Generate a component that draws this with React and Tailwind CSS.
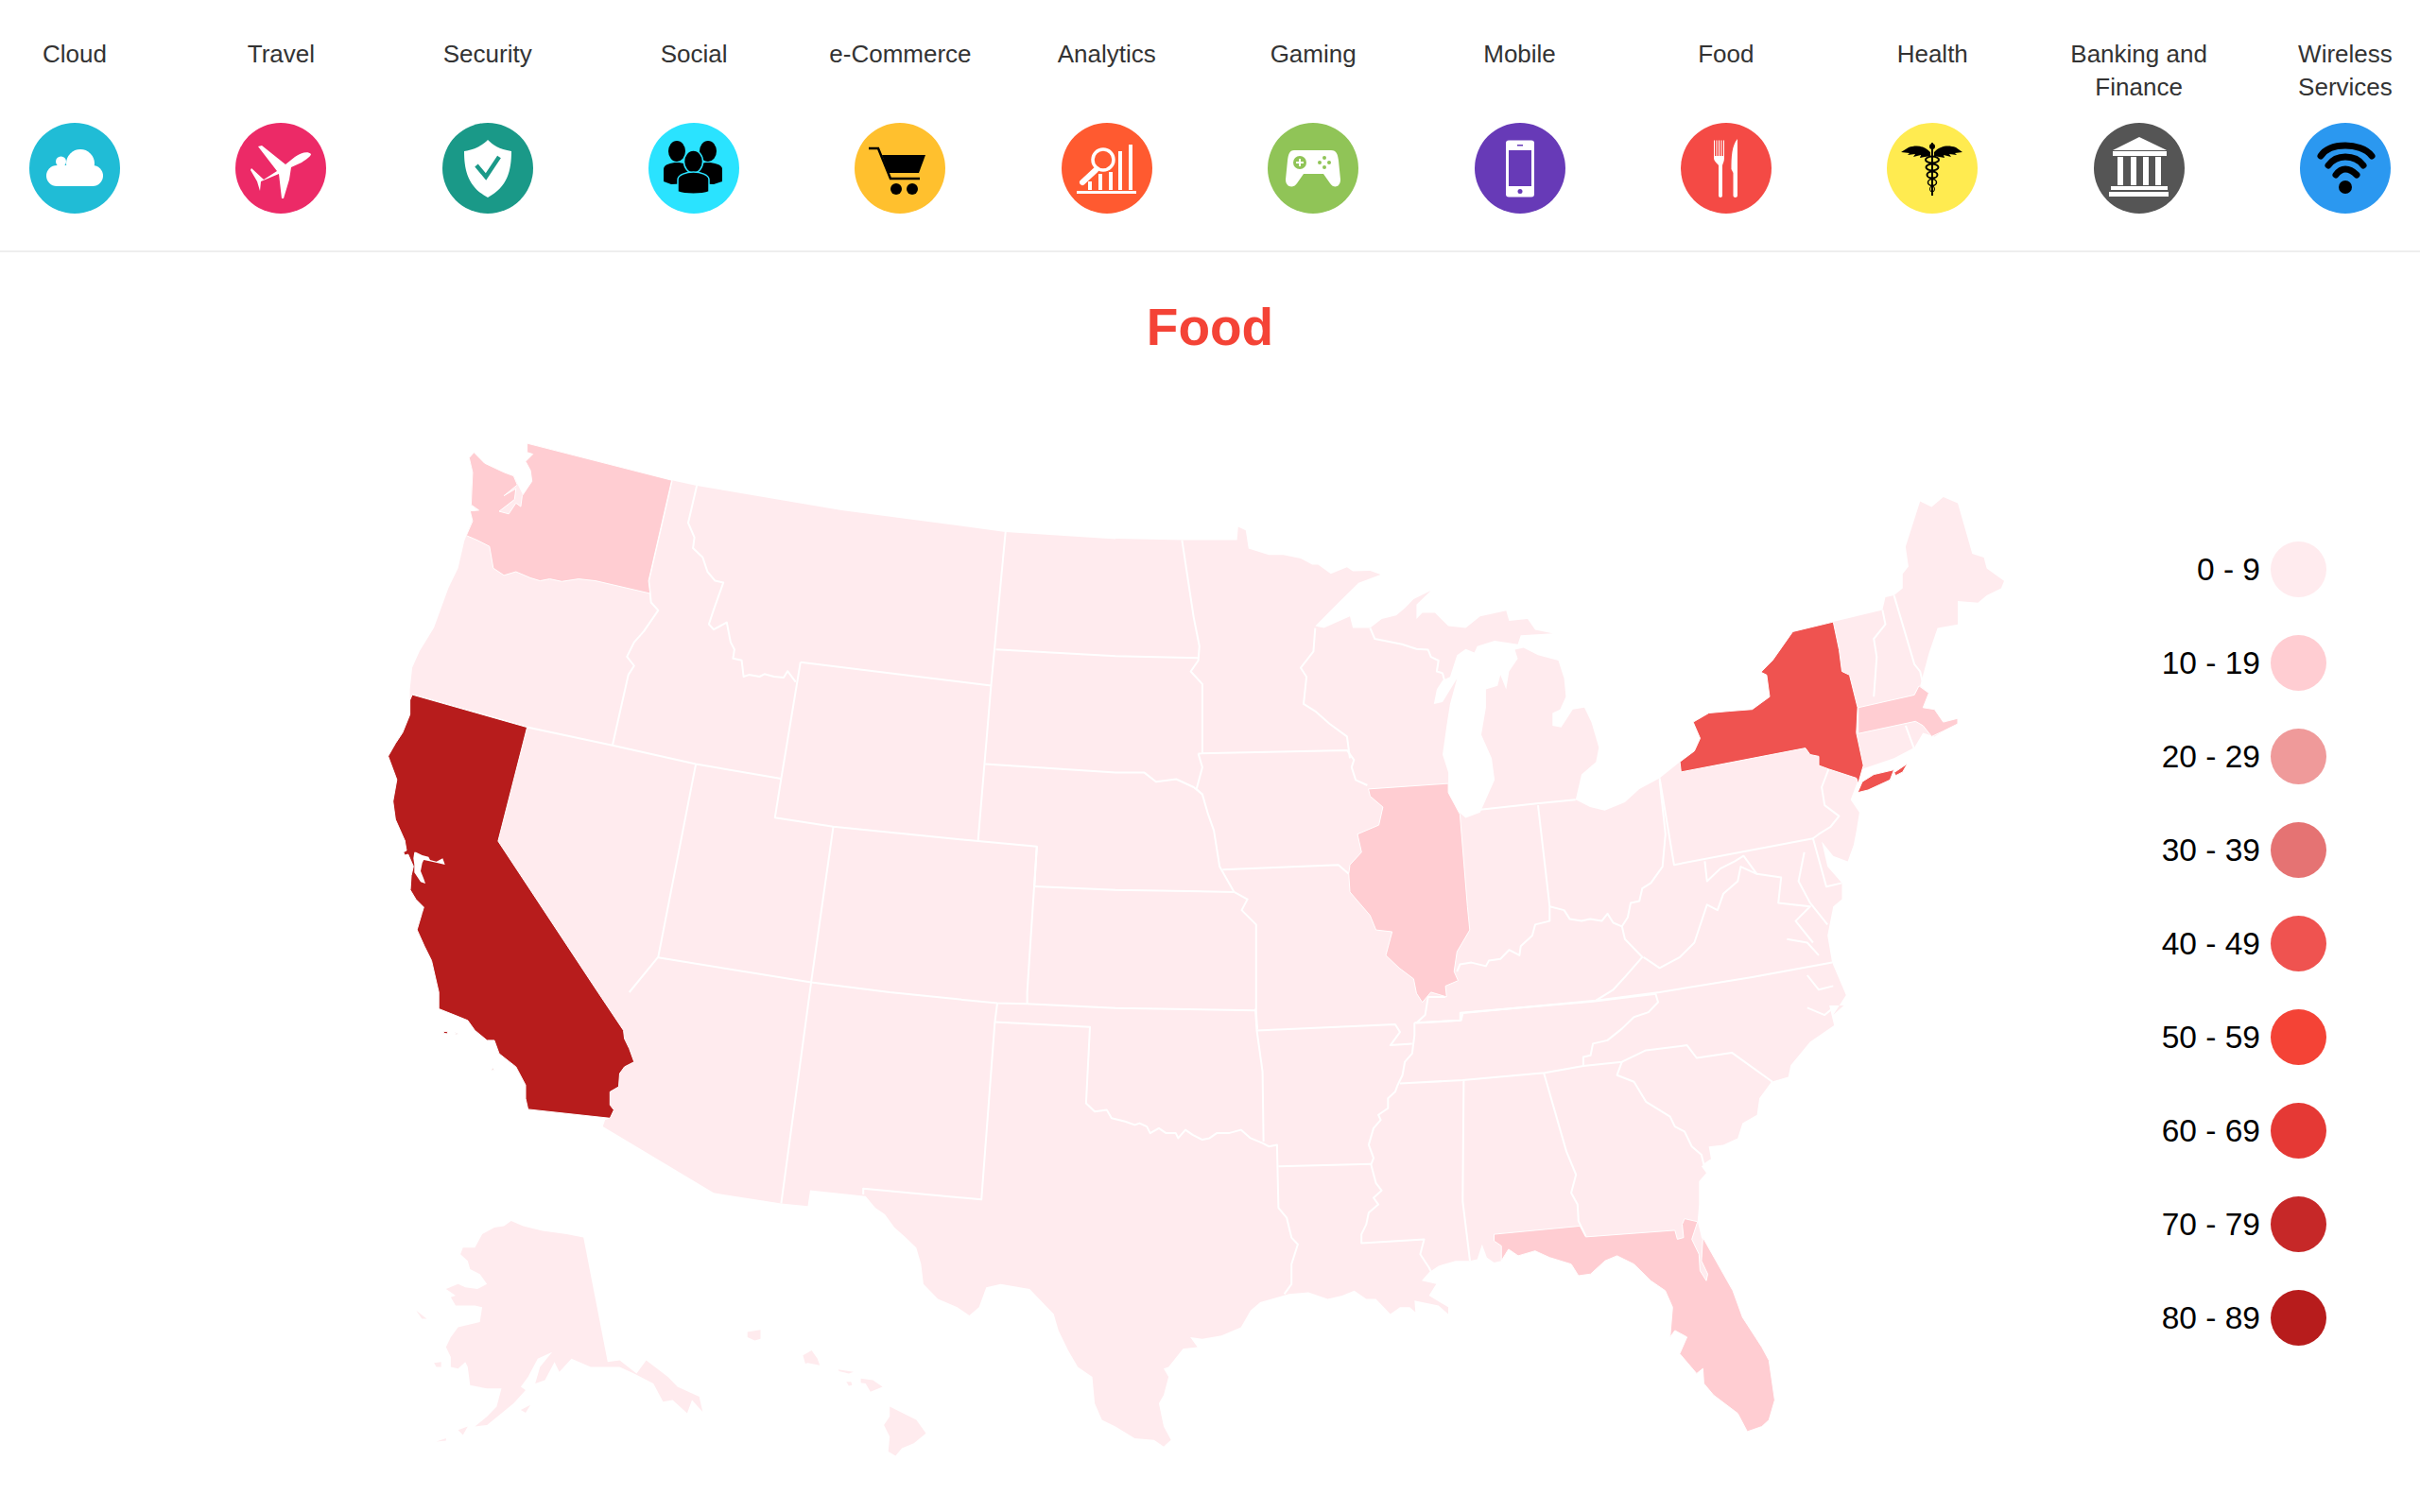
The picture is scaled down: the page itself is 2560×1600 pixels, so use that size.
// The map data is read off crops of the picture, each with its own origin and scale.
const crop = (ox, oy, sx, sy) => (s) =>
  s.trim().split(/\s+/).map((p) => {
    const [x, y] = p.split(',').map(Number);
    return `${(ox + x / sx).toFixed(1)},${(oy + y / sy).toFixed(1)}`;
  }).join(' ');

const nw = crop(380, 450, 1.96, 2.613);
const ne = crop(1180, 500, 1.633, 2.613);
const sw = crop(380, 1050, 1.96, 2.85);
const se = crop(1180, 1050, 1.96, 2.85);
const bay = crop(420, 880, 3, 3);

const RED = {
  50: '#FFEBEE', 100: '#FFCDD2', 200: '#EF9A9A', 300: '#E57373', 400: '#EF5350',
  500: '#F44336', 600: '#E53935', 800: '#C62828', 900: '#B71C1C',
};

const caCoast = [
  nw('150,1480 135,1440 120,1395 130,1350'),
  bay('85,240 60,215 42,185 45,140 52,110 35,72 25,75 20,65 30,60 25,30'),
  nw('95,1150 75,1090 70,1040 78,980 60,915 75,880 90,850 105,800 105,760'),
].join(' ');

const mainland = [
  nw('348,50 648,152 700,167 1000,235 1340,295 1568,315'),
  ne(`0,183 115,187 210,187 212,150 225,160 230,210 265,228 290,228 320,238 340,255 350,255 372,280 400,262 410,273 440,272 458,282
    420,305 385,360 345,425 360,430 405,398 410,430 440,430 460,405 485,395 500,375 515,350 545,327 520,365 520,405 530,388 552,388 575,425
    605,430 630,398 675,382 680,410 712,405 725,435 755,445 700,450 695,475 655,465 625,480 620,498 605,488 590,505 578,565 565,575 555,600 550,640
    565,635 590,570 578,640 572,700 565,780 575,830 575,885 590,935 605,955 630,940 655,850 650,790 632,725 640,650 640,600 660,590 665,560 675,600
    680,550 695,515 690,490 705,485 730,505 765,520 775,570 778,620 768,655 755,665 755,700 770,705 790,655 810,650 822,690 835,760 830,800 805,835
    795,905 820,925 845,935 880,912 905,875 940,845 975,800 1000,770 1010,735 998,690 1025,665 1060,660 1100,655 1130,620 1125,560 1115,552 1135,520
    1170,440 1240,413 1325,380 1330,345 1345,340 1360,320 1360,280 1370,260 1365,205 1390,80 1410,95 1430,68 1455,85 1480,225 1500,235 1505,265 1535,300
    1530,320 1505,340 1490,360 1455,355 1455,420 1420,430 1405,500 1395,560 1390,590 1405,610 1395,650 1415,655 1430,690 1455,680 1455,695 1430,715
    1415,730 1395,720 1380,760 1345,790 1290,820 1270,905 1285,940 1280,990 1275,1030 1265,1075 1240,1060 1220,1020 1230,1090 1255,1135 1255,1180
    1240,1200 1230,1280 1238,1355 1262,1445 1240,1500`),
  se(`1510,40 1480,40 1490,100 1440,150 1400,220 1395,255 1360,270 1335,320 1330,370 1300,395 1290,440 1260,460 1230,465 1235,505 1215,525 1225,545
    1210,570 1210,640 1207,690 1215,740 1280,900 1300,980 1340,1070 1355,1110 1367,1230 1355,1290 1340,1310 1310,1325 1290,1270 1240,1215 1220,1180
    1218,1135 1205,1150 1170,1090 1185,1040 1160,1020 1150,1040 1155,950 1140,900 1110,870 1075,820 1040,795 1015,810 985,850 960,855 945,820 900,800
    870,780 835,795 815,775 800,810 785,815 770,800 760,760 750,805 735,810 705,810 670,825 650,845 635,870 665,880 650,915 690,950 690,970 670,945
    620,930 622,965 610,950 590,950 570,970 540,925 520,925 495,900 470,915 440,925 400,905 360,910 300,935 280,960 260,1010 220,1035 180,1045 155,1040
    170,1070 140,1075 110,1130 100,1135 110,1160 100,1215 90,1240 100,1310 115,1350 100,1370 80,1350 40,1345 0,1310`),
  sw(`1540,1290 1525,1240 1520,1160 1490,1130 1470,1080 1450,1020 1440,970 1390,895 1330,880 1300,890 1285,950 1265,975 1240,950 1200,925 1170,880
    1165,820 1155,770 1130,735 1110,710 1090,670 1070,650 1050,615 935,597 930,645 875,637 735,605 505,405 510,385 522,380 350,353 345,320 345,280
    325,225 290,185 280,145 265,145 240,115 225,85 200,70 165,50 165,0`),
  caCoast,
  nw(`105,730 110,670 125,625 155,560 185,450 205,395 218,320 225,295 235,260 230,235 245,235 232,220 232,180 235,130 228,90 238,75 260,105 300,130
    320,140 340,195 358,155 355,125 345,100 360,80`),
].join(' ');

const islands = [
  sw(`465,740 515,1115 540,1110 575,1150 595,1110 640,1160 660,1190 705,1220 712,1265 690,1230 680,1270 650,1230 630,1235 610,1180 570,1150 540,1130
    515,1130 480,1130 440,1105 415,1145 405,1115 385,1170 365,1180 375,1130 400,1085 370,1105 350,1160 335,1190 345,1200 320,1240 295,1270 265,1305 240,1310
    265,1280 285,1250 295,1195 265,1195 230,1185 225,1130 220,1115 205,1135 190,1130 190,1100 180,1070 190,1040 205,1010 250,995 255,950 240,945 200,945
    190,920 200,915 180,895 205,880 220,890 245,895 265,880 250,850 230,835 225,810 210,790 215,770 240,770 255,730 280,710 300,705 315,690 340,705 380,720 430,730`),
  sw('155,1118 170,1115 170,1130 160,1130'),
  sw('205,1320 225,1310 215,1335'),
  sw('160,1355 180,1345 180,1352'),
  sw('335,1260 355,1245 345,1268'),
  sw('118,960 140,985 130,985'),
  sw('1100,1250 1155,1290 1175,1330 1150,1360 1125,1375 1112,1398 1097,1385 1100,1340 1088,1305 1100,1280'),
  sw('1040,1165 1065,1170 1085,1190 1060,1205 1050,1180 1040,1178'),
  sw('993,1138 1025,1145 1015,1150 995,1143'),
  sw('1010,1175 1020,1175 1022,1185 1015,1187'),
  sw('920,1095 938,1080 950,1105 955,1125 930,1118 925,1120'),
  sw('805,1025 832,1018 832,1045 820,1050 805,1040'),
];

const borders = [
  nw('648,152 600,430 603,465 605,490 620,512 590,570 570,600 555,640 570,665 558,690 525,885'),
  nw(`700,167 682,270 695,310 692,340 712,365 722,405 738,430 755,435 735,510 725,550 735,565 762,545 770,600 778,620 775,645 793,650 797,695 808,690
    830,695 840,688 860,695 880,698 888,680 905,710`),
  nw('110,745 348,835 525,885 698,937 875,977'),
  nw('915,655 875,977 862,1085 983,1110 1283,1150 1405,1165 1400,1275'),
  nw('915,655 1310,720 1283,1150'),
  nw('1340,295 1310,720'),
  nw('1320,620 1568,638') + ' ' + ne('143,513'),
  nw('1298,937 1568,960') + ' ' + ne('50,830 70,855 105,848 135,870 150,890'),
  nw('1400,1275 1568,1285') + ' ' + ne('205,1160'),
  nw('1405,1165 1385,1568') + ' ' + sw('1385,35'),
  nw('698,937 620,1470') + ' ' + sw('560,0'),
  nw('620,1472 937,1540 1100,1568') + ' ' + sw('1323,33 1385,35 1568,48') + ' ' + se('290,55'),
  nw('983,1110 937,1540') + ' ' + sw('875,637'),
  sw('1323,33 1318,90 1290,625 1045,592 1045,610'),
  sw('1318,90 1515,105 1507,335 1525,360 1550,355 1560,380') + ' ' + se(`20,390 40,400 50,395 65,405 72,425 90,410 105,425 125,425 130,440 145,415 160,430 180,445
    195,440 210,425 235,425 260,415 280,440 305,455 318,465 335,460 338,650 355,680 365,740 378,760 365,820 365,880 350,910`),
  se('338,525 530,518'),
  se('290,50 293,115 305,240 307,450'),
  se('293,115 580,97 590,120 570,160 615,155'),
  ne('205,1160 228,1180 218,1210 243,1250 243,1490 245,1540'),
  ne('185,1098 385,1085 403,1110'),
  ne('143,777 400,768 412,795 408,815 415,850 435,865'),
  ne('115,187 135,400 145,480 143,520 130,550 150,585 150,777'),
  ne('143,777 150,815 140,875 150,890 160,945 170,990 180,1090 205,1160'),
  ne('345,430 342,495 320,540 330,565 325,640 345,660 370,695 400,730 405,790'),
  ne('440,430 448,460 495,475 520,488 540,490 545,510 558,520 555,550 565,555 570,585'),
  ne('630,932 728,915 795,905'),
  ne('730,920 750,1200 750,1240 725,1250 720,1280 700,1310 698,1335 680,1320 665,1345 645,1350 640,1365 615,1355 595,1360 590,1380'),
  ne(`750,1200 775,1210 785,1235 805,1240 820,1235 840,1240 850,1220 860,1245 875,1255 885,1230 890,1190 905,1185 910,1150 925,1135 945,1090 950,1000 940,850`),
  ne('940,845 965,1085 1205,1012 1228,1145 1255,1135'),
  ne('1232,820 1220,870 1225,920 1250,950 1235,980 1215,1000 1205,1012'),
  ne(`1018,1075 1022,1130 1045,1095 1070,1075 1085,1060 1108,1110 1080,1090 1075,1130 1050,1165 1040,1210 1022,1195 1000,1300 975,1340 940,1370 912,1340`),
  ne('875,1255 880,1290 910,1340 880,1395 860,1430 830,1460'),
  ne('1238,1355 1100,1395 940,1437 830,1460 600,1495 597,1515 520,1522 535,1500 540,1450 570,1450'),
  ne('1108,1110 1150,1120 1145,1190 1200,1200 1175,1240 1205,1300'),
  ne('1190,1050 1180,1130 1200,1190 1230,1250'),
  ne('1160,1290 1195,1300 1215,1335'),
  ne('1195,1390 1215,1430 1240,1420'),
  ne('1195,1480 1225,1500 1240,1480'),
  se('620,92 715,85 715,62 990,28 1120,5 1125,30 1105,60 1075,75 1050,110 1020,145 990,155 985,190 970,195 970,222'),
  se('590,275 720,265 890,243 970,222 1050,210 1100,175 1185,160 1205,198 1278,182 1362,270'),
  se('1050,210 1040,250 1075,270 1100,330 1150,375 1160,405 1180,420 1195,465 1215,490 1220,520 1235,505'),
  se('888,243 935,480 955,550 945,605 958,640 960,690 975,735'),
  se('722,265 720,630 735,810'),
  se(`620,92 620,130 615,185 600,210 595,250 585,280 580,300 565,320 565,350 545,370 550,385 535,410 525,460 535,500 530,520 540,575 552,598 535,620 545,640
    525,665 520,700 510,730 510,757 640,745 632,790 650,830 655,845`),
  ne('1325,380 1330,420 1310,460 1315,510 1310,620'),
  ne('1345,340 1380,530 1390,550 1395,585'),
  ne('1365,700 1380,765'),
];

const highlighted = [
  {
    name: 'California', fill: RED[900],
    points: [
      nw('110,745 348,835 288,1150 495,1568'),
      sw(`548,115 550,140 560,170 570,210 550,225 540,245 538,285 520,300 520,340 528,355 520,380 350,353 345,320 345,280 325,225 290,185 280,145 265,145
        240,115 225,85 200,70 165,50 165,0`),
      caCoast,
    ].join(' '),
  },
  { name: 'California islands', fill: RED[900], points: sw('175,118 183,118 183,125 175,124') },
  { name: 'California islands', fill: RED[900], points: sw('198,122 207,127 200,126') },
  { name: 'California islands', fill: RED[900], points: sw('275,225 279,235 276,235') },
  {
    name: 'Washington', fill: RED[100],
    points: nw(`348,50 648,152 600,430 603,465 490,430 455,425 420,432 395,425 375,430 355,422 325,405 300,415 278,395 270,335 245,318 222,305 235,265 230,237
      248,235 232,220 235,130 228,90 238,75 260,105 300,130 320,140 328,165 300,195 325,175 322,205 290,238 310,245 325,215 335,225 338,195 358,155 355,125
      345,100 360,80 348,75`),
  },
  {
    name: 'New York', fill: RED[400],
    points: ne(`977,828 1192,762 1200,780 1215,785 1215,810 1232,820 1280,845 1283,860 1292,810 1280,720 1282,650 1268,560 1255,550 1250,490 1240,413 1170,440
      1135,520 1115,552 1125,560 1130,620 1100,655 1060,660 1025,665 998,690 1010,735 1000,770 975,800`),
  },
  { name: 'Long Island', fill: RED[400], points: ne('1282,885 1290,855 1310,835 1345,822 1338,850 1300,878') },
  { name: 'Long Island', fill: RED[400], points: ne('1345,830 1368,805 1360,828 1348,838') },
  {
    name: 'Massachusetts', fill: RED[100],
    points: ne('1283,650 1380,615 1388,590 1405,610 1395,650 1415,655 1430,690 1455,680 1455,695 1430,715 1410,730 1395,700 1382,688 1283,722'),
  },
  {
    name: 'Illinois', fill: RED[100],
    points: ne(`437,875 575,860 575,885 595,945 608,1200 612,1265 590,1325 585,1380 592,1405 570,1420 572,1450 545,1437 530,1465 520,1440 515,1400 490,1370
      467,1335 478,1270 450,1265 440,1225 405,1160 403,1110 405,1085 425,1050 418,1000 455,975 462,925 440,895`),
  },
  {
    name: 'Florida', fill: RED[100],
    points: se(`785,730 963,705 975,738 1160,718 1165,745 1178,740 1175,700 1180,683 1207,692 1195,745 1210,790 1212,840 1225,870 1228,850 1215,810 1218,740
      1280,900 1300,980 1340,1070 1355,1110 1367,1230 1355,1290 1340,1310 1310,1325 1290,1270 1240,1215 1220,1180 1218,1135 1205,1150 1170,1090 1185,1040
      1160,1020 1150,1040 1155,950 1140,900 1110,870 1075,820 1040,795 1015,810 985,850 960,855 945,820 900,800 870,780 835,795 815,775 800,810 800,765 785,750`),
  },
];

// San Francisco Bay, cut out of California
const sfBay = bay('55,65 60,65 80,75 100,80 105,90 125,95 145,85 152,105 130,100 110,95 85,90 80,100 75,125 85,150 90,165 75,160 55,130 55,105 52,85');

const UsMap = () => (
  <svg viewBox="380 450 1760 1110" className="block w-[1760px] h-[1110px] shrink-0">
    <polygon points={mainland} fill={RED[50]} />
    {islands.map((points, i) => (
      <polygon key={i} points={points} fill={RED[50]} />
    ))}
    {borders.map((points, i) => (
      <polyline key={i} points={points} fill="none" stroke="#fff" strokeWidth="2" strokeLinejoin="round" />
    ))}
    {highlighted.map((state, i) => (
      <polygon key={i} points={state.points} fill={state.fill} stroke="#fff" strokeWidth="1" strokeLinejoin="round" />
    ))}
    <polygon points={sfBay} fill="#fff" />
  </svg>
);

const CloudIcon = () => (
  <g fill="#fff">
    <circle cx="29" cy="56" r="11" />
    <circle cx="33.5" cy="41" r="5.5" />
    <circle cx="54" cy="43" r="15" />
    <circle cx="67" cy="56" r="11" />
    <rect x="29" y="45" width="38" height="22" />
  </g>
);

const PlaneIcon = () => (
  <path
    fill="#fff"
    d="M80 33C77 30 70 31 63 36L53 44 28 24 24 25 44 51 30 60 17 48 16 50 23 62 26 72 27 62 46 54 49 80 51 80 57 60 59 47 70 42C76 38 80 35 80 33Z"
  />
);

const ShieldIcon = () => (
  <g>
    <path fill="#fff" d="M48 18C43 23 36 28 23 30 23 50 27 68 48 79 69 68 73 50 73 30 60 28 53 23 48 18Z" />
    <path fill="none" stroke="#1A9988" strokeWidth="4.5" d="M36 45L46 57 60 36" />
  </g>
);

const PeopleIcon = () => (
  <g>
    <ellipse cx="30" cy="30" rx="9" ry="11" />
    <ellipse cx="63" cy="30" rx="9" ry="11" />
    <path d="M16 62V49C16 44 24 42 30 42 36 42 44 44 44 49V64L24 65Z" />
    <path d="M49 64V49C49 44 57 42 63 42 69 42 78 44 78 49V62L69 65Z" />
    <ellipse cx="47.5" cy="41" rx="10" ry="12" stroke="#2AE3FF" strokeWidth="1.5" />
    <path d="M31 73V60C31 55 40 52 47.5 52 55 52 64 55 64 60V73C56 76 39 76 31 73Z" stroke="#2AE3FF" strokeWidth="1.5" />
  </g>
);

const CartIcon = () => (
  <g>
    <path fill="none" stroke="#000" strokeWidth="2.5" d="M15 27H25L38 59H69" />
    <path d="M29 34H75L68 53H36Z" />
    <circle cx="44" cy="70" r="6" />
    <circle cx="61" cy="70" r="6" />
  </g>
);

const AnalyticsIcon = () => (
  <g fill="#fff">
    <rect x="16" y="72" width="63" height="3" />
    <rect x="28" y="62" width="4" height="9" />
    <rect x="39" y="54" width="4" height="17" />
    <rect x="50" y="52" width="4" height="19" />
    <rect x="60" y="30" width="4" height="41" />
    <rect x="71" y="23" width="4" height="48" />
    <circle cx="44" cy="39" r="11" fill="none" stroke="#fff" strokeWidth="3.5" />
    <path fill="none" stroke="#fff" strokeWidth="6" strokeLinecap="round" d="M36 50L22 63" />
  </g>
);

const GamepadIcon = () => (
  <g>
    <path
      fill="#fff"
      d="M28 29H67C73 29 74 33 75 40L77 60C77 68 70 70 66 64L59 54H38L31 64C27 70 19 68 19 60L21 40C22 33 23 29 28 29Z"
    />
    <circle cx="34" cy="42" r="7" fill="#90C457" />
    <path stroke="#fff" strokeWidth="2" d="M34 38V46M30 42H38" />
    <g fill="#90C457">
      <circle cx="60" cy="37" r="2" />
      <circle cx="60" cy="47" r="2" />
      <circle cx="55" cy="42" r="2" />
      <circle cx="65" cy="42" r="2" />
    </g>
  </g>
);

const PhoneIcon = () => (
  <g>
    <rect x="33" y="18.5" width="30" height="60" rx="3" fill="#fff" />
    <rect x="36" y="29" width="24" height="38" fill="#673AB7" />
    <rect x="45" y="23" width="6" height="1.5" fill="#673AB7" />
    <circle cx="48" cy="72.5" r="2.5" fill="#673AB7" />
  </g>
);

const CutleryIcon = () => (
  <g fill="#fff">
    <path d="M35 18.5H36V35H37.5V18.5H38.5V35H40V18.5H41V35H42.5V18.5H43.5V35H45V18.5H46V37C46 41 44.5 43 44 45V77C44 79.5 40 79.5 40 77V45C39 43 35 41 35 37Z" />
    <path d="M60 17V77C60 79.5 55.5 79.5 55.5 77V53L53.5 49C53.5 36 54 24 60 17Z" />
  </g>
);

const CaduceusIcon = () => (
  <g fill="none" stroke="#000">
    <path strokeWidth="2" d="M48 21V77" />
    <ellipse cx="48" cy="39" rx="7" ry="3.5" strokeWidth="2" />
    <ellipse cx="48" cy="47" rx="6.5" ry="3.5" strokeWidth="2" />
    <ellipse cx="48" cy="55" rx="5.5" ry="3.5" strokeWidth="2" />
    <ellipse cx="48" cy="63" rx="4.5" ry="3.5" strokeWidth="1.5" />
    <ellipse cx="48" cy="70" rx="2.5" ry="3" strokeWidth="1" />
    <circle cx="48" cy="25" r="3" fill="#000" stroke="none" />
    <path fill="#000" stroke="none" d="M46 31C38 23 30 24 23 26L15 31 24 32 22 34 30 33 28 36 36 34 35 37 46 35Z" />
    <path fill="#000" stroke="none" d="M50 31C58 23 66 24 73 26L80 31 72 32 74 34 66 33 68 36 60 34 61 37 50 35Z" />
  </g>
);

const BankIcon = () => (
  <g fill="#fff">
    <path d="M48 15L77 29H20Z" />
    <rect x="20" y="30" width="57" height="5" />
    <rect x="25" y="36" width="6" height="30" />
    <rect x="39" y="36" width="6" height="30" />
    <rect x="52" y="36" width="6" height="30" />
    <rect x="65" y="36" width="6" height="30" />
    <rect x="18" y="67" width="60" height="4" />
    <rect x="16" y="73" width="63" height="5" />
  </g>
);

const WifiIcon = () => (
  <g fill="none" stroke="#000" strokeWidth="7" strokeLinecap="round">
    <path d="M22 35C28 26 38 24 48 24 58 24 70 27 76 35" />
    <path d="M30 45C35 38 42 36 48 36 55 36 62 38 67 45" />
    <path d="M38 55C41 51 45 49 48 49 52 49 56 51 60 55" />
    <circle cx="48" cy="68" r="7" fill="#000" stroke="none" />
  </g>
);

const categories = [
  { label: 'Cloud', color: 'bg-[#20BCD6]', Icon: CloudIcon },
  { label: 'Travel', color: 'bg-[#EC2A67]', Icon: PlaneIcon },
  { label: 'Security', color: 'bg-[#1A9988]', Icon: ShieldIcon },
  { label: 'Social', color: 'bg-[#2AE3FF]', Icon: PeopleIcon },
  { label: 'e-Commerce', color: 'bg-[#FFC02E]', Icon: CartIcon },
  { label: 'Analytics', color: 'bg-[#FF5A30]', Icon: AnalyticsIcon },
  { label: 'Gaming', color: 'bg-[#90C457]', Icon: GamepadIcon },
  { label: 'Mobile', color: 'bg-[#673AB7]', Icon: PhoneIcon },
  { label: 'Food', color: 'bg-[#F44A45]', Icon: CutleryIcon },
  { label: 'Health', color: 'bg-[#FFEB50]', Icon: CaduceusIcon },
  { label: 'Banking and Finance', color: 'bg-[#555555]', Icon: BankIcon },
  { label: 'Wireless Services', color: 'bg-[#2B98F0]', Icon: WifiIcon },
];

const legend = [
  { label: '0 - 9', color: 'bg-[#FFEBEE]' },
  { label: '10 - 19', color: 'bg-[#FFCDD2]' },
  { label: '20 - 29', color: 'bg-[#EF9A9A]' },
  { label: '30 - 39', color: 'bg-[#E57373]' },
  { label: '40 - 49', color: 'bg-[#EF5350]' },
  { label: '50 - 59', color: 'bg-[#F44336]' },
  { label: '60 - 69', color: 'bg-[#E53935]' },
  { label: '70 - 79', color: 'bg-[#C62828]' },
  { label: '80 - 89', color: 'bg-[#B71C1C]' },
];

const App = () => {
  return (
    <div className="bg-white font-['Liberation_Sans',sans-serif] w-[2560px] h-[1600px] overflow-hidden">
      <nav className="flex justify-between pt-[40px] pb-[39px] border-b-2 border-[#eeeeee]">
        {categories.map(({ label, color, Icon }) => (
          <div key={label} className="w-[158px] flex flex-col items-center">
            <div className="h-[70px] text-center text-[26px] leading-[35px] text-[#333333]">{label}</div>
            <div className={`mt-[20px] w-[96px] h-[96px] rounded-full ${color}`}>
              <svg viewBox="0 0 96 96" className="w-[96px] h-[96px]">
                <Icon />
              </svg>
            </div>
          </div>
        ))}
      </nav>

      <h1 className="mt-[51px] text-center text-[55px] leading-[56px] font-bold text-[#F44336]">Food</h1>

      <div className="mt-[76px] flex justify-between pl-[380px] pr-[99px]">
        <UsMap />
        <ul className="mt-[123px] flex flex-col gap-[40px]">
          {legend.map((item) => (
            <li key={item.label} className="flex items-center justify-end gap-[11px] h-[59px]">
              <span className="text-[33.5px] leading-none text-black">{item.label}</span>
              <span className={`w-[59px] h-[59px] rounded-full ${item.color}`} />
            </li>
          ))}
        </ul>
      </div>
    </div>
  );
};

export default App;
